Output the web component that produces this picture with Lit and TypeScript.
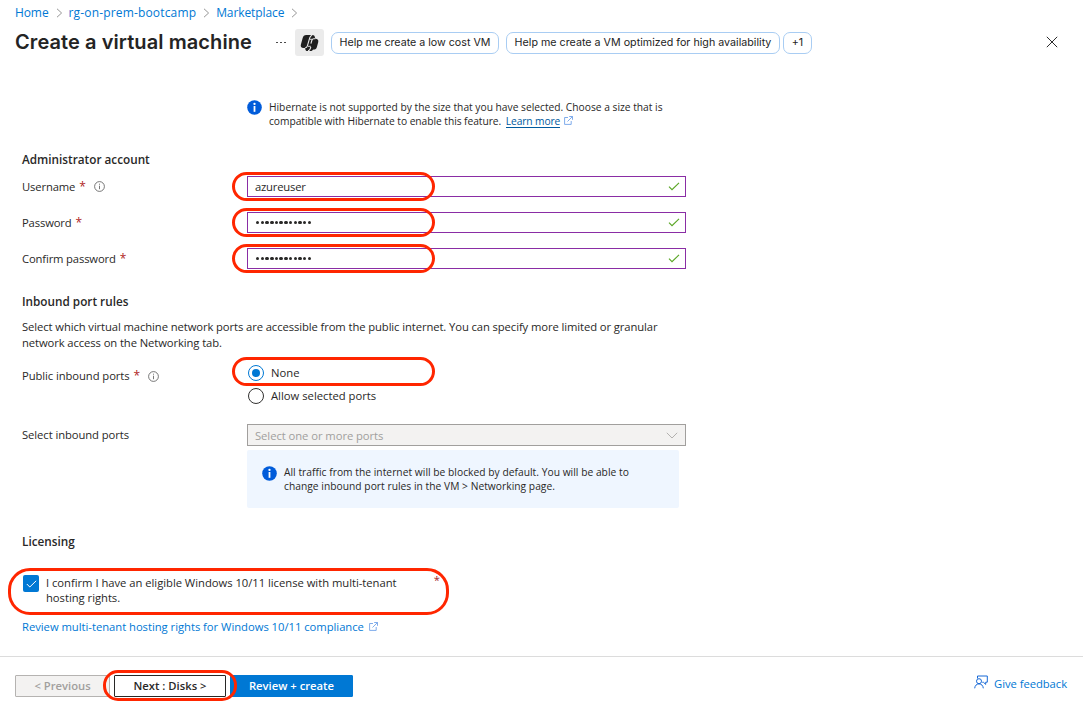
import { LitElement, html, css, svg } from "lit";
import { customElement, property } from "lit/decorators.js";

const infoSolid = svg`<circle cx="7.5" cy="7.5" r="7.3" fill="#015cda"/><circle cx="7.5" cy="3.9" r="1.15" fill="#fff"/><path d="M7.5 6v5.8" stroke="#fff" stroke-width="1.8"/>`;

@customElement("ui-icon")
export class UiIcon extends LitElement {
  @property() name = "";

  static styles = css`
    :host { display: inline-flex; flex: none; }
    svg { display: block; }
  `;

  render() {
    switch (this.name) {
      case "sep":
        return html`<svg width="7" height="10" viewBox="0 0 7 10"><path d="M1 .8 5.6 5 1 9.2" fill="none" stroke="#8a8a8a" stroke-width=".9"/></svg>`;
      case "copilot":
        return html`<svg width="19" height="18" viewBox="0 0 19 18">
          <path d="M6.200 1h6.300c1.300 0 2 .7 2.300 1.900l.5 1.800c2.400 0 3.500 1.300 2.900 3.500l-1.300 4.700c-.5 1.800-1.600 2.600-3.200 2.600l-.8.300c-.5.900-1.200 1.300-2.300 1.300H7.500c-1.300 0-1.900-.7-2.200-1.900L5 14H3.600C1.200 14 .3 12.500.9 10.400L2.600 4.200C3.200 2 4.300 1 6.200 1Z" fill="#1f1f1f"/>
          <path d="M12.200 1.200c-1.500.2-2.100 1.200-2.500 2.700L7.400 11.900c-.4 1.400-1.100 2.100-2.500 2.100M8 16.900c1.200-.2 1.900-1 2.300-2.300l.5-1.800M15.300 4.700h-1.400c-1.300 0-1.800.7-2.100 1.800l-.9 3.200" fill="none" stroke="#ebebeb" stroke-width="1.100"/>
          <path d="M9.700 5.300h2.300M8 12.300h2.800" stroke="#ebebeb" stroke-width=".9"/>
        </svg>`;
      case "close":
        return html`<svg width="12" height="12" viewBox="0 0 12 12"><path d="m.8.8 10.400 10.400M11.200.8.800 11.200" stroke="#2b2b2b" stroke-width="1"/></svg>`;
      case "info":
        return html`<svg width="15" height="15" viewBox="0 0 15 15">${infoSolid}</svg>`;
      case "hint":
        return html`<svg width="11" height="11" viewBox="0 0 11 11"><circle cx="5.500" cy="5.500" r="4.900" fill="none" stroke="#555" stroke-width=".8"/><path d="M5.500 4.700v3.500M5.500 2.700v1" stroke="#555" stroke-width=".8"/></svg>`;
      case "external":
        return html`<svg width="9" height="9" viewBox="0 0 9 9"><path d="M4 1.500H.600v6.900h6.600V5M5.200.500h3.300v3.300M8.400.600 3.500 5.500" fill="none" stroke="#5f97e6" stroke-width=".8"/></svg>`;
      case "valid":
        return html`<svg width="12" height="9" viewBox="0 0 12 9"><path d="M1 4.700 4 7.700 11 .800" fill="none" stroke="#5aa625" stroke-width="1.150"/></svg>`;
      case "chevron":
        return html`<svg width="12" height="7" viewBox="0 0 12 7"><path d="m.800.800 5.200 5.200L11.200.800" fill="none" stroke="#b3b1af" stroke-width="1"/></svg>`;
      case "tick":
        return html`<svg width="11" height="8" viewBox="0 0 11 8"><path d="M.800 4 3.800 7 10.200.800" fill="none" stroke="#fff" stroke-width="1"/></svg>`;
      default:
        return html`<svg width="14" height="14" viewBox="0 0 14 14"><path d="M3.500 3.500V1h9.800v6.200h-1.600v2.200L9.500 7.300H8.300" fill="none" stroke="#1668d6" stroke-width="1"/><circle cx="5" cy="6.200" r="2.500" fill="none" stroke="#1668d6" stroke-width="1"/><path d="M.700 13.300C.900 10.600 2.600 8.900 5 8.900s4.100 1.700 4.300 4.400" fill="none" stroke="#1668d6" stroke-width="1"/></svg>`;
    }
  }
}

@customElement("app-root")
export class AppRoot extends LitElement {
  static styles = css`
    :host { display: block; }
    * { box-sizing: border-box; }
    .page { display: flex; flex-direction: column; width: 1083px; height: 709px; overflow: hidden; background: #fff; color: #292827; font: 11.25px/16px "Open Sans", "Noto Sans", sans-serif; white-space: nowrap; }
    .crumbs { display: flex; align-items: center; height: 26px; padding-left: 15px; font-size: 12px; color: #0078d4; }
    .crumbs ui-icon { margin: 0 6px 0 7px; }
    .crumbs .home { letter-spacing: -0.1px; }
    .crumbs .group { letter-spacing: 0.16px; }
    .crumbs .market { letter-spacing: -0.1px; }
    .titlebar { display: flex; align-items: center; height: 33px; padding: 0 25px 0 15px; }
    h1 { margin: -2px 0 0; width: 260px; font: 600 20px/28px Inter, sans-serif; letter-spacing: 0.08px; color: #242424; }
    .more { display: flex; gap: 2.500px; width: 20px; padding-left: 1px; }
    .more i { width: 1.500px; height: 1.500px; border-radius: 50%; background: #333; }
    .copilot { display: flex; align-items: center; justify-content: center; width: 29px; height: 27px; border-radius: 3px; background: #ebebeb; }
    .pill { display: flex; align-items: center; justify-content: center; height: 22px; padding-top: 1px; border: 1px solid #a9cdf3; border-radius: 7px; font: 10.700px/16px Inter, sans-serif; color: #242424; }
    .p1 { width: 168px; margin-left: 7px; letter-spacing: -0.01px; }
    .p2 { width: 274px; margin-left: 7px; letter-spacing: 0.01px; }
    .p3 { width: 29px; margin-left: 3px; }
    .close { margin: -1px 0 0 auto; }
    .body { flex: none; display: flex; flex-direction: column; height: 597px; padding: 41px 0 0 22px; }
    .note { display: flex; height: 50px; margin-left: 225px; font-size: 10.250px; line-height: 14px; gap: 7px; letter-spacing: -0.010px; }
    .note .learn { color: #005a9e; border-bottom: 1px solid #005a9e; line-height: 12px; display: inline-block; margin: 0 1px 0 2px; letter-spacing: -0.13px; }
    .compat { letter-spacing: -0.050px; }
    h2 { margin: 0; font: 600 11.750px/18px "Open Sans", sans-serif; color: #292827; }
    .field { display: flex; align-items: center; height: 21px; margin-bottom: 15px; }
    .label { display: flex; align-items: center; width: 225px; letter-spacing: -0.080px; }
    .field .label { letter-spacing: -0.150px; }
    .req { margin-left: 4px; color: #b01e24; font-size: 12px; }
    .label ui-icon { margin-left: 8px; }
    .input { position: relative; display: flex; align-items: center; justify-content: space-between; width: 439px; height: 21px; padding: 0 5px 0 7px; border: 1px solid #8a2da5; background: #fff; letter-spacing: -0.200px; }
    .dots { display: flex; gap: 1.250px; padding-left: 1px; }
    .dots i { width: 3.450px; height: 3.450px; border-radius: 50%; background: #292827; }
    .ring { position: absolute; border: 3px solid #ff2600; border-radius: 15px; width: 203px; height: 29px; left: -16px; top: -5px; pointer-events: none; }
    .account { margin-top: 8px; }
    .inbound { margin-top: 8px; }
    .para { margin-top: 9px; letter-spacing: -0.098px; }
    .ports { display: flex; height: 48px; margin-top: 10px; }
    .ports .label { height: 30px; }
    .radios { display: flex; flex-direction: column; width: 439px; }
    .radio { position: relative; display: flex; align-items: center; height: 23px; gap: 7px; padding-left: 1px; }
    .radio .ring { top: -4px; left: -15px; }
    .circle { display: flex; align-items: center; justify-content: center; width: 16px; height: 16px; border: 1px solid #323130; border-radius: 50%; }
    .circle.on { border-color: #0078d4; }
    .circle.on::after { content: ""; width: 8px; height: 8px; border-radius: 50%; background: #0078d4; }
    .select-row { display: flex; align-items: center; height: 22px; margin-top: 15px; }
    .select { display: flex; align-items: center; justify-content: space-between; width: 439px; height: 22px; padding: 1px 7px 0 7px; border: 1px solid #a19f9d; background: #f3f2f1; color: #a19f9d; letter-spacing: -0.060px; }
    .traffic { display: flex; gap: 7px; width: 432px; height: 58px; margin: 4px 0 0 225px; padding: 16px 0 0 15px; background: #eff6ff; font-size: 10.250px; line-height: 13.500px; border-radius: 2px; letter-spacing: 0.025px; }
    .licensing { margin-top: 24px; }
    .confirm { position: relative; display: flex; height: 46px; width: 441px; margin: 18px 0 0 -14px; padding: 7px 0 0 15px; line-height: 15px; letter-spacing: -0.030px; }
    .confirm .ring { inset: 0; width: 441px; height: 47px; border-radius: 22px; }
    .box { display: flex; align-items: center; justify-content: center; width: 16px; height: 17px; border-radius: 2px; background: #0078d4; margin-right: 7px; }
    .confirm .star { margin-left: auto; margin-right: 9px; margin-top: -3px; color: #a4262c; }
    .review { display: flex; align-items: center; gap: 5px; margin-top: 5px; color: #0078d4; letter-spacing: -0.030px; }
    .review ui-icon { margin-top: -2px; }
    .footer { display: flex; flex: 1; border-top: 1px solid #dcdcdc; padding: 18px 16px 0 15px; }
    .btn { position: relative; display: flex; align-items: center; justify-content: center; height: 22px; border: 1px solid #292827; border-radius: 1px; font-weight: 600; background: #fff; }
    .prev { width: 95px; border-color: #b5b3b1; color: #a19f9d; background: #f3f2f1; }
    .next { width: 112px; margin-left: 4px; z-index: 1; }
    .next .ring { left: -12px; top: -6px; width: 134px; height: 31px; }
    .create { width: 123px; margin-left: 4px; border-color: #0078d4; background: #0078d4; color: #fff; }
    .feedback { display: flex; align-items: center; gap: 6px; margin-left: auto; height: 18px; color: #0078d4; letter-spacing: -0.050px; }
    .feedback ui-icon { margin-bottom: 5px; }
  `;

  private field(label: string, value: string, hint = false) {
    return html`<div class="field">
      <div class="label"><span>${label}</span><span class="req">*</span>${hint ? html`<ui-icon name="hint"></ui-icon>` : ""}</div>
      <div class="input">
        ${value ? html`<span>${value}</span>` : html`<span class="dots">${Array.from({ length: 12 }, () => html`<i></i>`)}</span>`}
        <ui-icon name="valid"></ui-icon>
        <span class="ring"></span>
      </div>
    </div>`;
  }

  render() {
    return html`<div class="page">
      <nav class="crumbs">
        <span class="home">Home</span><ui-icon name="sep"></ui-icon>
        <span class="group">rg-on-prem-bootcamp</span><ui-icon name="sep"></ui-icon>
        <span class="market">Marketplace</span><ui-icon name="sep"></ui-icon>
      </nav>
      <header class="titlebar">
        <h1>Create a virtual machine</h1>
        <span class="more"><i></i><i></i><i></i></span>
        <span class="copilot"><ui-icon name="copilot"></ui-icon></span>
        <span class="pill p1">Help me create a low cost VM</span>
        <span class="pill p2">Help me create a VM optimized for high availability</span>
        <span class="pill p3">+1</span>
        <ui-icon class="close" name="close"></ui-icon>
      </header>
      <main class="body">
        <div class="note">
          <ui-icon name="info"></ui-icon>
          <div>Hibernate is not supported by the size that you have selected. Choose a size that is<br /><span class="compat">compatible with Hibernate to enable this feature.</span> <span class="learn">Learn more</span> <ui-icon name="external"></ui-icon></div>
        </div>
        <h2>Administrator account</h2>
        <div class="account">
          ${this.field("Username", "azureuser", true)}
          ${this.field("Password", "")}
          ${this.field("Confirm password", "")}
        </div>
        <h2 class="inbound">Inbound port rules</h2>
        <div class="para">Select which virtual machine network ports are accessible from the public internet. You can specify more limited or granular<br />network access on the Networking tab.</div>
        <div class="ports">
          <div class="label"><span>Public inbound ports</span><span class="req">*</span><ui-icon name="hint"></ui-icon></div>
          <div class="radios">
            <div class="radio"><span class="circle on"></span><span>None</span><span class="ring"></span></div>
            <div class="radio"><span class="circle"></span><span>Allow selected ports</span></div>
          </div>
        </div>
        <div class="select-row">
          <div class="label">Select inbound ports</div>
          <div class="select"><span>Select one or more ports</span><ui-icon name="chevron"></ui-icon></div>
        </div>
        <div class="traffic">
          <ui-icon name="info"></ui-icon>
          <div>All traffic from the internet will be blocked by default. You will be able to<br />change inbound port rules in the VM &gt; Networking page.</div>
        </div>
        <h2 class="licensing">Licensing</h2>
        <div class="confirm">
          <span class="box"><ui-icon name="tick"></ui-icon></span>
          <div>I confirm I have an eligible Windows 10/11 license with multi-tenant<br />hosting rights.</div>
          <span class="star">*</span>
          <span class="ring"></span>
        </div>
        <div class="review"><span>Review multi-tenant hosting rights for Windows 10/11 compliance</span><ui-icon name="external"></ui-icon></div>
      </main>
      <footer class="footer">
        <span class="btn prev">&lt; Previous</span>
        <span class="btn next">Next : Disks &gt;<span class="ring"></span></span>
        <span class="btn create">Review + create</span>
        <span class="feedback"><ui-icon name="feedback"></ui-icon>Give feedback</span>
      </footer>
    </div>`;
  }
}
